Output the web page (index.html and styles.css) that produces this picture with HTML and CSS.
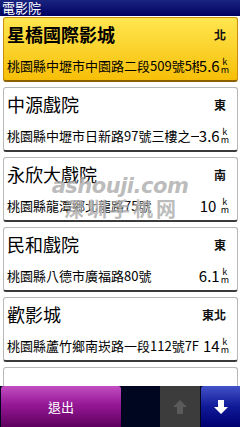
FILE: index.html
```html
<!DOCTYPE html>
<html>
<head>
<meta charset="utf-8">
<link rel="stylesheet" href="styles.css">
</head>
<body>
<div class="screen">
  <div class="titlebar"><span class="ttl">電影院</span></div>
  <div class="list">
    <div class="card selected">
      <div class="row1"><span class="name">星橋國際影城</span><span class="dir">北</span></div>
      <div class="row2"><span class="addr">桃園縣中壢市中園路二段509號5樓</span><span class="dist">5.6<span class="unit"><i>k</i><i>m</i></span></span></div>
    </div>
    <div class="card">
      <div class="row1"><span class="name">中源戲院</span><span class="dir">東</span></div>
      <div class="row2"><span class="addr">桃園縣中壢市日新路97號三樓之一</span><span class="dist">3.6<span class="unit"><i>k</i><i>m</i></span></span></div>
    </div>
    <div class="card">
      <div class="row1"><span class="name">永欣大戲院</span><span class="dir">南</span></div>
      <div class="row2"><span class="addr">桃園縣龍潭鄉北龍路75號</span><span class="dist">10 <span class="unit"><i>k</i><i>m</i></span></span></div>
    </div>
    <div class="card">
      <div class="row1"><span class="name">民和戲院</span><span class="dir">東</span></div>
      <div class="row2"><span class="addr">桃園縣八德市廣福路80號</span><span class="dist">6.1<span class="unit"><i>k</i><i>m</i></span></span></div>
    </div>
    <div class="card">
      <div class="row1"><span class="name">歡影城</span><span class="dir">東北</span></div>
      <div class="row2"><span class="addr">桃園縣蘆竹鄉南崁路一段112號7F</span><span class="dist">14<span class="unit"><i>k</i><i>m</i></span></span></div>
    </div>
    <div class="card last"></div>
  </div>
  <div class="bottombar">
    <div class="btn exit">退出</div>
    <div class="spacer"></div>
    <div class="btn up">
      <svg width="16" height="16" viewBox="0 0 16 16"><path d="M8 1 L15 8 L11 8 L11 15 L5 15 L5 8 L1 8 Z" fill="#5a5a5a"/></svg>
    </div>
    <div class="btn down">
      <svg width="16" height="16" viewBox="0 0 16 16"><path d="M8 15 L15 8 L11 8 L11 1 L5 1 L5 8 L1 8 Z" fill="#ffffff"/></svg>
    </div>
  </div>
  <div class="watermark">
    <div class="wm1">ashouji.com</div>
    <div class="wm2">深圳手机网</div>
  </div>
</div>
</body>
</html>
```
FILE: styles.css
```css
html, body {
  margin: 0;
  padding: 0;
}
body {
  width: 240px;
  height: 427px;
  overflow: hidden;
  background: #ffffff;
  font-family: "Noto Sans CJK TC", "Noto Sans", sans-serif;
}
.screen {
  position: relative;
  width: 240px;
  height: 427px;
  display: flex;
  flex-direction: column;
  background: #ffffff;
}
.titlebar {
  height: 16px;
  display: flex;
  align-items: center;
  padding-left: 2px;
  background: linear-gradient(#1a2580, #000060);
}
.ttl {
  font-size: 13px;
  line-height: 16px;
  color: #ffffff;
}
.list {
  flex: 1;
  overflow: hidden;
  padding-top: 1px;
  display: flex;
  flex-direction: column;
  gap: 5px;
}
.card {
  flex: none;
  height: 65px;
  box-sizing: border-box;
  margin: 0 2px 0 3px;
  border: 1px solid #b8b8b8;
  border-bottom: 2px solid #3a3a3a;
  border-radius: 3px;
  background: #ffffff;
  padding: 3px 8px 0 3px;
  display: flex;
  flex-direction: column;
}
.card.selected {
  background: linear-gradient(#ffe650, #f7bf08);
  border-color: #c8900a;
  border-bottom-color: #8a6000;
}
.card.last {
  height: 30px;
}
.row1 {
  height: 26px;
  display: flex;
  align-items: center;
  justify-content: space-between;
}
.name {
  font-size: 18px;
  line-height: 22px;
  color: #000000;
}
.selected .name {
  font-weight: bold;
}
.dir {
  font-size: 12px;
  font-weight: bold;
  color: #111111;
  margin-right: 3px;
}
.row2 {
  margin-top: 8px;
  height: 22px;
  display: flex;
  align-items: center;
}
.addr {
  flex: 1;
  min-width: 0;
  overflow: hidden;
  white-space: nowrap;
  font-size: 13px;
  line-height: 18px;
  color: #000000;
}
.dist {
  flex: none;
  display: flex;
  align-items: center;
  font-size: 15px;
  line-height: 18px;
  color: #000000;
  white-space: pre;
}
.unit {
  display: inline-flex;
  flex-direction: column;
  align-items: center;
  margin-left: 1px;
  font-size: 9px;
  line-height: 8px;
}
.unit i {
  font-style: normal;
}
.bottombar {
  flex: none;
  height: 41px;
  display: flex;
  background: #000520;
}
.btn {
  display: flex;
  align-items: center;
  justify-content: center;
}
.exit {
  width: 120px;
  margin-left: 1px;
  border-radius: 3px 3px 0 0;
  background: linear-gradient(#c24ec2, #961896 45%, #5e005e);
  color: #ffffff;
  font-size: 13px;
}
.spacer {
  flex: 1;
}
.up {
  width: 40px;
  background: #3c3c3c;
}
.down {
  width: 39px;
  margin-left: 1px;
  border-radius: 3px 0 0 0;
  background: linear-gradient(#4352c8, #101a98 50%, #000070);
}
.watermark {
  position: absolute;
  left: 50px;
  top: 175px;
  width: 140px;
  text-align: center;
  white-space: nowrap;
  color: rgba(130, 130, 130, 0.55);
  text-shadow: 0 0 2px rgba(255, 255, 255, 0.8);
  pointer-events: none;
}
.wm1 {
  font-family: "DejaVu Sans", sans-serif;
  font-size: 21px;
  font-weight: bold;
  font-style: italic;
  line-height: 22px;
  letter-spacing: -0.5px;
}
.wm2 {
  font-size: 20px;
  font-weight: bold;
  letter-spacing: 3px;
  line-height: 24px;
  padding-left: 3px;
}
```
